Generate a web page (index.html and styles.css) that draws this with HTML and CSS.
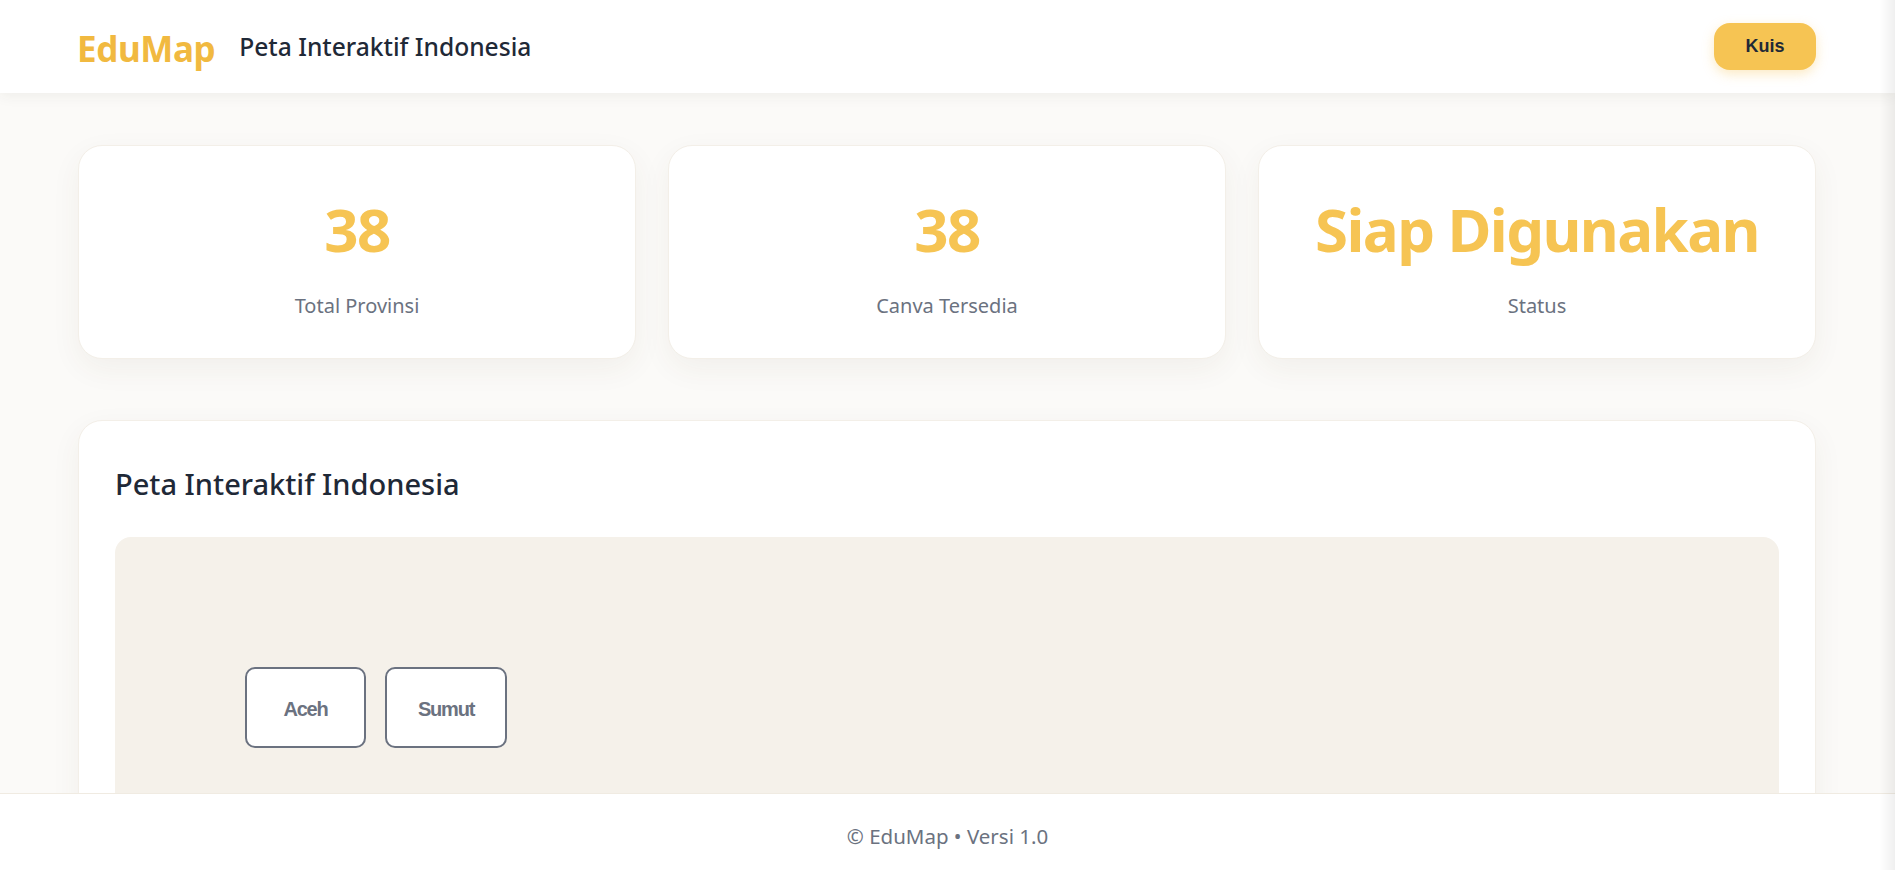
FILE: index.html
```html
<!DOCTYPE html>
<html lang="id">
<head>
<meta charset="utf-8">
<title>EduMap - Peta Interaktif Indonesia</title>
<link rel="stylesheet" href="styles.css">
</head>
<body>
<header class="topbar">
  <div class="brand">
    <span class="logo">EduMap</span>
    <span class="brand-title">Peta Interaktif Indonesia</span>
  </div>
  <button class="quiz-btn">Kuis</button>
</header>
<main class="main">
  <section class="stats">
    <div class="stat-card">
      <div class="stat-value">38</div>
      <div class="stat-label">Total Provinsi</div>
    </div>
    <div class="stat-card">
      <div class="stat-value">38</div>
      <div class="stat-label">Canva Tersedia</div>
    </div>
    <div class="stat-card">
      <div class="stat-value">Siap Digunakan</div>
      <div class="stat-label">Status</div>
    </div>
  </section>
  <section class="map-card">
    <h2 class="map-title">Peta Interaktif Indonesia</h2>
    <div class="map-area">
      <button class="province p-aceh">Aceh</button>
      <button class="province p-sumut">Sumut</button>
    </div>
  </section>
</main>
<footer class="footer">© EduMap • Versi 1.0</footer>
<div class="edge-shade"></div>
</body>
</html>
```

FILE: styles.css
```css
* { box-sizing: border-box; }
html, body { margin: 0; padding: 0; height: 100%; }
body {
  font-family: "Noto Sans", "Open Sans", sans-serif;
  background: #fbfaf8;
  color: #1f2937;
  display: flex;
  flex-direction: column;
  height: 100vh;
  overflow: hidden;
}
.topbar {
  flex: 0 0 93px;
  height: 93px;
  background: #ffffff;
  display: flex;
  align-items: center;
  justify-content: space-between;
  padding: 0 79px 0 77px;
  box-shadow: 0 2px 14px rgba(60, 50, 30, 0.07);
  position: relative;
  z-index: 2;
}
.brand { display: flex; align-items: center; gap: 24px; }
.logo {
  font-size: 35px;
  font-weight: 700;
  color: #f1b940;
  letter-spacing: -0.4px;
  margin-top: 4px;
}
.brand-title {
  font-size: 24.6px;
  font-weight: 500;
  color: #1f2937;
}
.quiz-btn {
  width: 102px;
  height: 47px;
  border: none;
  border-radius: 16px;
  background: #f6c453;
  color: #1f2937;
  font-family: "Liberation Sans", Arial, sans-serif;
  font-weight: 700;
  font-size: 18px;
  box-shadow: 0 4px 12px rgba(246, 196, 83, 0.35);
}
.main {
  flex: 1 1 auto;
  overflow: hidden;
  padding: 52px 79px 0 78px;
}
.stats {
  display: grid;
  grid-template-columns: repeat(3, 1fr);
  gap: 32px;
}
.stat-card {
  background: #ffffff;
  border: 1px solid #f3efe8;
  border-radius: 24px;
  height: 214px;
  padding: 47px 20px 0;
  text-align: center;
  box-shadow: 0 10px 30px rgba(80, 60, 30, 0.06);
}
.stat-value {
  font-size: 60px;
  font-weight: 700;
  line-height: 1.2;
  color: #f6c453;
  letter-spacing: -1.6px;
}
.stat-label {
  margin-top: 26px;
  font-size: 20px;
  line-height: 1.5;
  color: #6b7280;
}
.map-card {
  margin-top: 61px;
  background: #ffffff;
  border: 1px solid #f3efe8;
  border-radius: 24px;
  padding: 46px 36px 36px;
  box-shadow: 0 10px 30px rgba(80, 60, 30, 0.06);
}
.map-title {
  margin: 0;
  font-size: 29px;
  font-weight: 500;
  line-height: 1.2;
  color: #1f2937;
}
.map-area {
  margin-top: 35px;
  height: 560px;
  background: #f5f1ea;
  border-radius: 16px;
  position: relative;
}
.province {
  position: absolute;
  top: 130px;
  width: 121px;
  height: 81px;
  padding-top: 5px;
  background: #ffffff;
  border: 2px solid #6b7280;
  border-radius: 10px;
  color: #6b7280;
  font-family: "Liberation Sans", Arial, sans-serif;
  font-weight: 700;
  font-size: 20px;
  letter-spacing: -1.2px;
}
.p-aceh { left: 130px; }
.p-sumut { left: 270px; width: 122px; }
.footer {
  flex: 0 0 77px;
  height: 77px;
  background: #ffffff;
  border-top: 1px solid #f0ebe2;
  display: flex;
  align-items: center;
  justify-content: center;
  padding-top: 7px;
  font-size: 20.5px;
  color: #6b7280;
  position: relative;
  z-index: 2;
}
.edge-shade {
  position: fixed;
  top: 0;
  right: 0;
  width: 16px;
  height: 100%;
  background: linear-gradient(to right, rgba(0,0,0,0), rgba(0,0,0,0.06));
  pointer-events: none;
  z-index: 5;
}
```
